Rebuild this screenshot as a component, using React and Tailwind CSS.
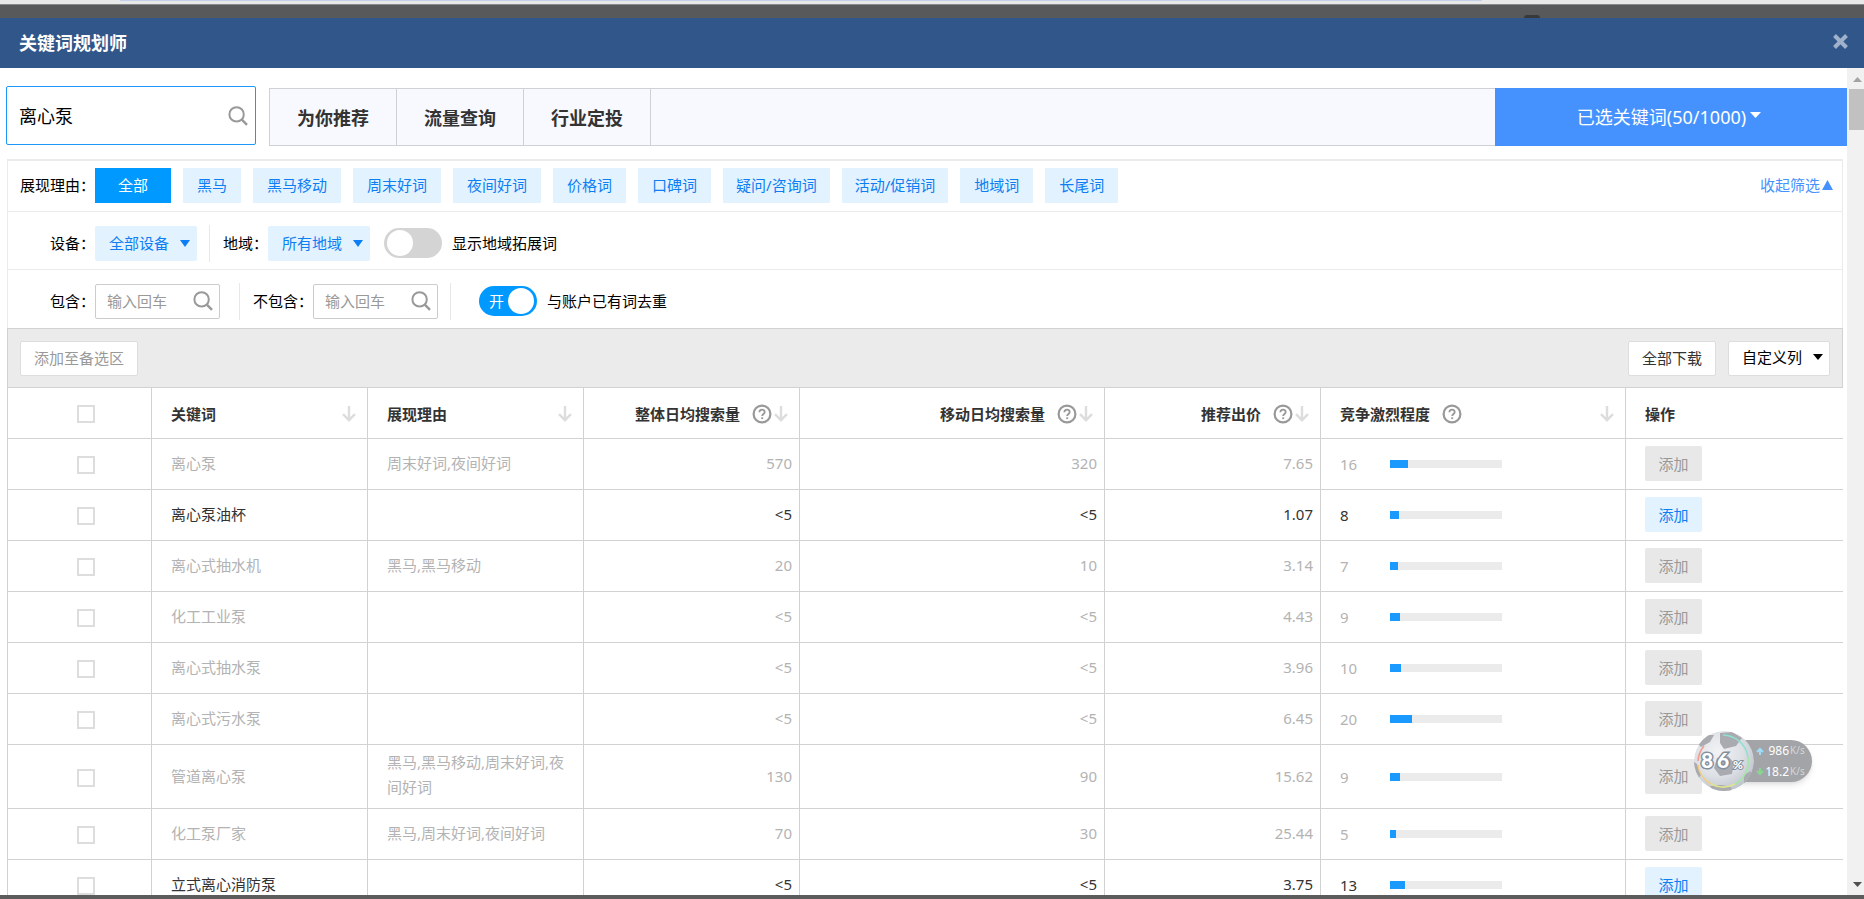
import React from "react";

const rows = [
  { kw: "离心泵", reason: "周末好词,夜间好词", total: "570", mobile: "320", bid: "7.65", level: 16 },
  { kw: "离心泵油杯", reason: "", total: "<5", mobile: "<5", bid: "1.07", level: 8, open: true },
  { kw: "离心式抽水机", reason: "黑马,黑马移动", total: "20", mobile: "10", bid: "3.14", level: 7 },
  { kw: "化工工业泵", reason: "", total: "<5", mobile: "<5", bid: "4.43", level: 9 },
  { kw: "离心式抽水泵", reason: "", total: "<5", mobile: "<5", bid: "3.96", level: 10 },
  { kw: "离心式污水泵", reason: "", total: "<5", mobile: "<5", bid: "6.45", level: 20 },
  { kw: "管道离心泵", reason: "黑马,黑马移动,周末好词,夜间好词", total: "130", mobile: "90", bid: "15.62", level: 9 },
  { kw: "化工泵厂家", reason: "黑马,周末好词,夜间好词", total: "70", mobile: "30", bid: "25.44", level: 5 },
  { kw: "立式离心消防泵", reason: "", total: "<5", mobile: "<5", bid: "3.75", level: 13, open: true },
];

const reasons = ["黑马", "黑马移动", "周末好词", "夜间好词", "价格词", "口碑词", "疑问/咨询词", "活动/促销词", "地域词", "长尾词"];

function SearchIcon({ className }) {
  return (
    <svg className={className} viewBox="0 0 20 20" fill="none" stroke="#999" strokeWidth="2" aria-hidden="true">
      <circle cx="8.6" cy="8.4" r="7.2" />
      <path d="M13.6 13.4 19 18.8" strokeWidth="2.4" />
    </svg>
  );
}

function SortArrow() {
  return (
    <svg className="h-4 w-[14px] shrink-0" viewBox="0 0 14 16" fill="none" stroke="#ddd" strokeWidth="2.4" aria-hidden="true">
      <path d="M7 0v14M1 8.2l6 6 6-6" />
    </svg>
  );
}

function HelpIcon() {
  return (
    <svg className="h-5 w-5 shrink-0" viewBox="0 0 20 20" fill="none" stroke="#999" strokeWidth="2.2" aria-hidden="true">
      <circle cx="10" cy="10" r="8.4" />
      <path d="M7.4 8.2c0-3.4 5.3-3.3 5.3-.2 0 2-2.5 1.9-2.5 4" strokeWidth="1.8" />
      <path d="M10.2 13.3v1.8" strokeWidth="1.9" />
    </svg>
  );
}

function Caret({ className }) {
  return (
    <svg className={className} viewBox="0 0 10 7" preserveAspectRatio="none" fill="currentColor" aria-hidden="true">
      <path d="M0 0h10L5 7z" />
    </svg>
  );
}

function Dropdown({ id, label, value }) {
  return (
    <div className="flex items-center">
      <label htmlFor={id} className="shrink-0">{label}</label>
      <div className="relative flex items-center text-[#0d7ff2]">
        <select id={id} className="h-[35px] w-[102px] appearance-none rounded-xs bg-[#e2f2ff] pl-[14px]">
          <option>{value}</option>
        </select>
        <Caret className="pointer-events-none absolute right-[7px] h-[7px] w-[10px]" />
      </div>
    </div>
  );
}

function SmallSearch({ id, label }) {
  return (
    <div className="flex items-center">
      <label htmlFor={id} className="shrink-0">{label}</label>
      <div className="flex h-[35px] w-[125px] items-center rounded-xs border border-[#ccc] bg-white pl-[11px] pr-[6px]">
        <input id={id} placeholder="输入回车" className="w-full min-w-0 outline-none placeholder:text-[#999]" />
        <SearchIcon className="h-5 w-5 shrink-0" />
      </div>
    </div>
  );
}

function Toggle({ id, on, label }) {
  return (
    <label htmlFor={id} className="flex items-center gap-[10px]">
      <input id={id} type="checkbox" defaultChecked={on} className="sr-only" />
      {on ? (
        <span className="flex h-[30px] w-[58px] items-center justify-between rounded-full bg-[#0099ff] pl-[10px] pr-[3px] text-white">
          开<span className="h-[26px] w-[26px] rounded-full bg-white" />
        </span>
      ) : (
        <span className="flex h-[30px] w-[58px] items-center rounded-full bg-[#d4d4d4] pl-[3px]">
          <span className="h-[26px] w-[26px] rounded-full bg-white" />
        </span>
      )}
      <span>{label}</span>
    </label>
  );
}

function Divider() {
  return <span className="h-[37px] w-px bg-[#e8e8e8]" />;
}

function Check({ label }) {
  return (
    <input
      type="checkbox"
      aria-label={label}
      className="mx-auto block h-[18px] w-[18px] appearance-none border-2 border-[#ddd] bg-white"
    />
  );
}

const headCell = "border-b border-l border-[#d2d2d2] pt-[2px] font-bold";

function NumberHead({ children }) {
  return (
    <th scope="col" className={headCell + " pr-[11px]"}>
      <div className="flex items-center justify-end">
        <span className="mr-3">{children}</span>
        <HelpIcon />
        <span className="ml-[2px] flex"><SortArrow /></span>
      </div>
    </th>
  );
}

function TextHead({ children, help }) {
  return (
    <th scope="col" className={headCell + " pl-[19px] pr-[11px]"}>
      <div className="flex items-center">
        <span className="mr-3">{children}</span>
        {help && <HelpIcon />}
        <span className="ml-auto flex"><SortArrow /></span>
      </div>
    </th>
  );
}

function KeywordTable() {
  const cell = "border-b border-l border-[#d2d2d2]";
  return (
    <table className="w-full table-fixed border-separate border-spacing-0 text-left text-[#333]">
      <colgroup>
        <col className="w-[144px]" />
        <col className="w-[216px]" />
        <col className="w-[216px]" />
        <col className="w-[216px]" />
        <col className="w-[305px]" />
        <col className="w-[216px]" />
        <col className="w-[305px]" />
        <col className="w-[218px]" />
      </colgroup>
      <thead>
        <tr className="h-[51px]">
          <th scope="col" className={headCell + " pl-3"}><Check label="全选" /></th>
          <TextHead>关键词</TextHead>
          <TextHead>展现理由</TextHead>
          <NumberHead>整体日均搜索量</NumberHead>
          <NumberHead>移动日均搜索量</NumberHead>
          <NumberHead>推荐出价</NumberHead>
          <TextHead help>竞争激烈程度</TextHead>
          <th scope="col" className={headCell + " pl-[19px]"}>操作</th>
        </tr>
      </thead>
      <tbody>
        {rows.map((r) => (
          <tr key={r.kw} className={r.open ? "h-[51px] text-[#333]" : "h-[51px] text-[#b3b3b3]"}>
            <td className={cell + " pl-3 pt-[2px]"}><Check label={r.kw} /></td>
            <td className={cell + " pb-[2px] pl-[19px] pr-2"}>{r.kw}</td>
            <td className={cell + " break-all pb-[2px] pl-[19px] pr-2"}>
              <div className={r.reason.length > 15 ? "pb-[6px] pt-[5px] leading-[25px]" : ""}>{r.reason}</div>
            </td>
            <td className={cell + " pb-[2px] pr-[7px] text-right"}>{r.total}</td>
            <td className={cell + " pb-[2px] pr-[7px] text-right"}>{r.mobile}</td>
            <td className={cell + " pb-[2px] pr-[7px] text-right"}>{r.bid}</td>
            <td className={cell + " pl-[19px]"}>
              <div className="flex items-center">
                <span className="w-[50px]">{r.level}</span>
                <div className="h-2 w-28 bg-[#ebebeb]">
                  <div className="h-2 bg-[#1a9aff]" style={{ width: `${r.level}%` }} />
                </div>
              </div>
            </td>
            <td className={cell + " pb-px pl-[19px]"}>
              <button
                type="button"
                className={
                  r.open
                    ? "block h-[35px] w-[57px] rounded-xs bg-[#e2f2ff] text-[#0d7ff2]"
                    : "block h-[35px] w-[57px] rounded-xs bg-[#e8e8e8] text-[#999]"
                }
              >
                添加
              </button>
            </td>
          </tr>
        ))}
      </tbody>
    </table>
  );
}

function SpeedWidget() {
  return (
    <div className="absolute bottom-[108px] right-[52px] flex items-center">
      <svg className="relative z-10 -mr-4 h-[60px] w-[60px] shrink-0" viewBox="0 0 60 60" aria-hidden="true">
        <defs>
          <radialGradient id="ball" cx="40%" cy="35%" r="70%">
            <stop offset="0" stopColor="#f2f3f5" />
            <stop offset=".6" stopColor="#dcdfe4" />
            <stop offset="1" stopColor="#bcc3cc" />
          </radialGradient>
          <clipPath id="ballClip"><circle cx="30" cy="30" r="30" /></clipPath>
          <filter id="soft"><feGaussianBlur stdDeviation="0.7" /></filter>
        </defs>
        <g clipPath="url(#ballClip)">
          <circle cx="30" cy="30" r="30" fill="url(#ball)" />
          <g fill="#a9abb0" filter="url(#soft)">
            <path d="M26 2 38 1l10 6-6 8-12 3-4-6z" />
            <path d="M4 13 12 4l8 0-4 7-9 5z" />
            <path d="M23 27l11-2 6 7-2 11-12 2-6-8z" />
            <path d="M0 31l3 2 4 11-3 4-4-8z" />
            <path d="M16 55l12-1 9 2 1 5H18z" />
            <path d="M50 44l7-4v8l-7 7z" />
          </g>
        </g>
        <g fill="none" strokeWidth="1.6">
          <path d="M29 4a26 26 0 0 1 25 22" stroke="#8fe0d0" />
          <path d="M54 26a26 26 0 0 1-13 27" stroke="#a5e6a8" />
          <path d="M41 53a26 26 0 0 1-24 0" stroke="#e2e58a" />
          <path d="M17 53A26 26 0 0 1 4 34" stroke="#f2cf7c" />
          <path d="M4 30a26 26 0 0 1 6-15" stroke="#f29a92" />
        </g>
        <g fill="#fff" stroke="#84909e" strokeWidth="3" paintOrder="stroke" fontFamily="Lato, sans-serif" fontWeight="900">
          <text x="7" y="37" fontSize="21">8</text>
          <text x="23" y="37" fontSize="21">6</text>
          <text x="39" y="38" fontSize="12" strokeWidth="2">%</text>
        </g>
      </svg>
      <div className="flex h-[42px] w-[74px] flex-col justify-center rounded-r-full bg-[#a3a4a7] pl-[18px] text-xs leading-[21px] text-white shadow-md">
        {[["986", "#9fdcf8", "M4 8V2M1 5l3-3 3 3"], ["18.2", "#86d692", "M4 0v6M1 3l3 3 3-3"]].map(([n, color, d]) => (
          <div key={n} className="flex h-[21px] items-center">
            <svg className="h-2 w-2 shrink-0" viewBox="0 0 8 8" fill="none" stroke={color} strokeWidth="2" aria-hidden="true"><path d={d} /></svg>
            <span className="w-[25px] text-right">{n}</span>
            <span className="ml-px text-[10px] text-[#d6d6d8]">K/s</span>
          </div>
        ))}
      </div>
    </div>
  );
}

export default function App() {
  return (
    <div className="relative flex h-screen flex-col overflow-hidden bg-white font-['Noto_Sans','Noto_Sans_CJK_SC',sans-serif] text-[15px] leading-5 text-black">
      <div className="h-1 shrink-0 bg-[#e8e8e8] pl-[120px] pr-[382px]">
        <div className="h-px bg-[#c5d0ea]" />
      </div>
      <div className="flex h-[14px] shrink-0 items-end border-t border-[#8a8a8a] bg-[#58595b] pl-[1524px]">
        <div className="h-[3px] w-4 rounded-t-full bg-[#38393b]" />
      </div>
      <header className="flex h-[50px] shrink-0 items-center justify-between bg-[#31578a] pl-[19px] pr-4">
        <h1 className="text-lg font-bold text-white">关键词规划师</h1>
        <button type="button" aria-label="关闭" className="mb-1">
          <svg className="h-[15px] w-[15px]" viewBox="0 0 15 15" fill="none" stroke="#a0b1cb" strokeWidth="4" aria-hidden="true">
            <path d="M1.5 1.5l12 12M13.5 1.5l-12 12" />
          </svg>
        </button>
      </header>

      <div className="flex min-h-0 flex-1">
        <main className="min-w-0 flex-1 overflow-hidden pt-[18px]">
          <div className="flex items-start pl-[6px]">
            <div className="flex h-[59px] w-[250px] shrink-0 items-center rounded-xs border border-[#1e96fa] bg-white pl-3 pr-[7px]">
              <input aria-label="关键词" defaultValue="离心泵" className="w-full min-w-0 text-lg outline-none" />
              <SearchIcon className="h-5 w-5 shrink-0" />
            </div>
            <div className="ml-[13px] mt-[2px] flex h-[58px] flex-1">
              <nav className="flex flex-1 border-y border-l border-[#d0d0d8] bg-[#f8f9ff]">
                {["为你推荐", "流量查询", "行业定投"].map((t) => (
                  <button key={t} type="button" className="w-[127px] border-r border-[#d0d0d8] pt-[2px] text-lg font-bold text-[#333]">{t}</button>
                ))}
              </nav>
              <button type="button" className="flex w-[352px] items-center justify-center gap-1 bg-[#4592ff] pr-1 text-lg text-white">
                已选关键词(50/1000)
                <Caret className="mb-1 h-[6px] w-[11px] shrink-0" />
              </button>
            </div>
          </div>

          <div className="ml-[7px] mr-1 mt-[13px]">
            <section className="border-x border-t-2 border-[#ebebeb]">
              <div className="flex h-[51px] items-center border-b border-[#ebebeb] pb-[2px] pl-3 pr-[9px]">
                <span className="w-[75px] shrink-0">展现理由：</span>
                <div className="flex gap-3">
                  <button type="button" className="h-[35px] w-[76px] bg-[#0099ff] text-white">全部</button>
                  {reasons.map((t) => (
                    <button
                      key={t}
                      type="button"
                      className={
                        t.includes("/")
                          ? "h-[35px] whitespace-nowrap bg-[#e2f2ff] px-[13px] text-[#0d7ff2]"
                          : "h-[35px] whitespace-nowrap bg-[#e2f2ff] px-[14px] text-[#0d7ff2]"
                      }
                    >
                      {t}
                    </button>
                  ))}
                </div>
                <button type="button" className="ml-auto flex items-center gap-[2px] text-[#4592ff]">
                  收起筛选
                  <svg className="h-[10px] w-[11px]" viewBox="0 0 11 10" fill="currentColor" aria-hidden="true"><path d="M5.5 0 11 10H0z" /></svg>
                </button>
              </div>
              <div className="flex h-[58px] items-center border-b border-[#ebebeb] pl-[42px] pt-[5px]">
                <Dropdown id="device" label="设备：" value="全部设备" />
                <span className="ml-3 mr-[13px] flex"><Divider /></span>
                <Dropdown id="region" label="地域：" value="所有地域" />
                <span className="ml-[14px]"><Toggle id="expand" label="显示地域拓展词" /></span>
              </div>
              <div className="flex h-[58px] items-center pl-[42px] pt-1">
                <SmallSearch id="include" label="包含：" />
                <span className="ml-[19px] mr-[13px] flex"><Divider /></span>
                <SmallSearch id="exclude" label="不包含：" />
                <span className="ml-3 mr-7 flex"><Divider /></span>
                <Toggle id="dedupe" on label="与账户已有词去重" />
              </div>
            </section>

            <div className="flex h-[60px] items-center border border-[#d2d2d2] bg-[#ebebeb] px-3">
              <button type="button" className="h-[35px] w-[118px] rounded-xs border border-[#ddd] bg-white text-[#999]">添加至备选区</button>
              <button type="button" className="ml-auto h-[35px] w-[88px] rounded-xs border border-[#ddd] bg-white text-[#333]">全部下载</button>
              <div className="relative ml-3 flex items-center">
                <select aria-label="自定义列" className="h-[35px] w-[102px] appearance-none rounded-xs border border-[#ddd] bg-white pb-[2px] pl-[13px]">
                  <option>自定义列</option>
                </select>
                <Caret className="pointer-events-none absolute right-[7px] mb-[2px] h-[6px] w-[10px]" />
              </div>
            </div>
            <KeywordTable />
          </div>
        </main>

        <div className="flex w-[17px] shrink-0 flex-col items-center bg-[#f1f1f1] pt-[9px] pb-2" aria-hidden="true">
          <Caret className="ml-1 h-[5px] w-[9px] shrink-0 rotate-180 text-[#a3a3a3]" />
          <div className="mt-[7px] h-[41px] w-[15px] self-end bg-[#c1c1c1]" />
          <Caret className="ml-1 mt-auto h-[5px] w-[9px] shrink-0 text-[#505050]" />
        </div>
      </div>
      <div className="h-1 shrink-0 bg-[#5c5c5c]" />
      <SpeedWidget />
    </div>
  );
}
